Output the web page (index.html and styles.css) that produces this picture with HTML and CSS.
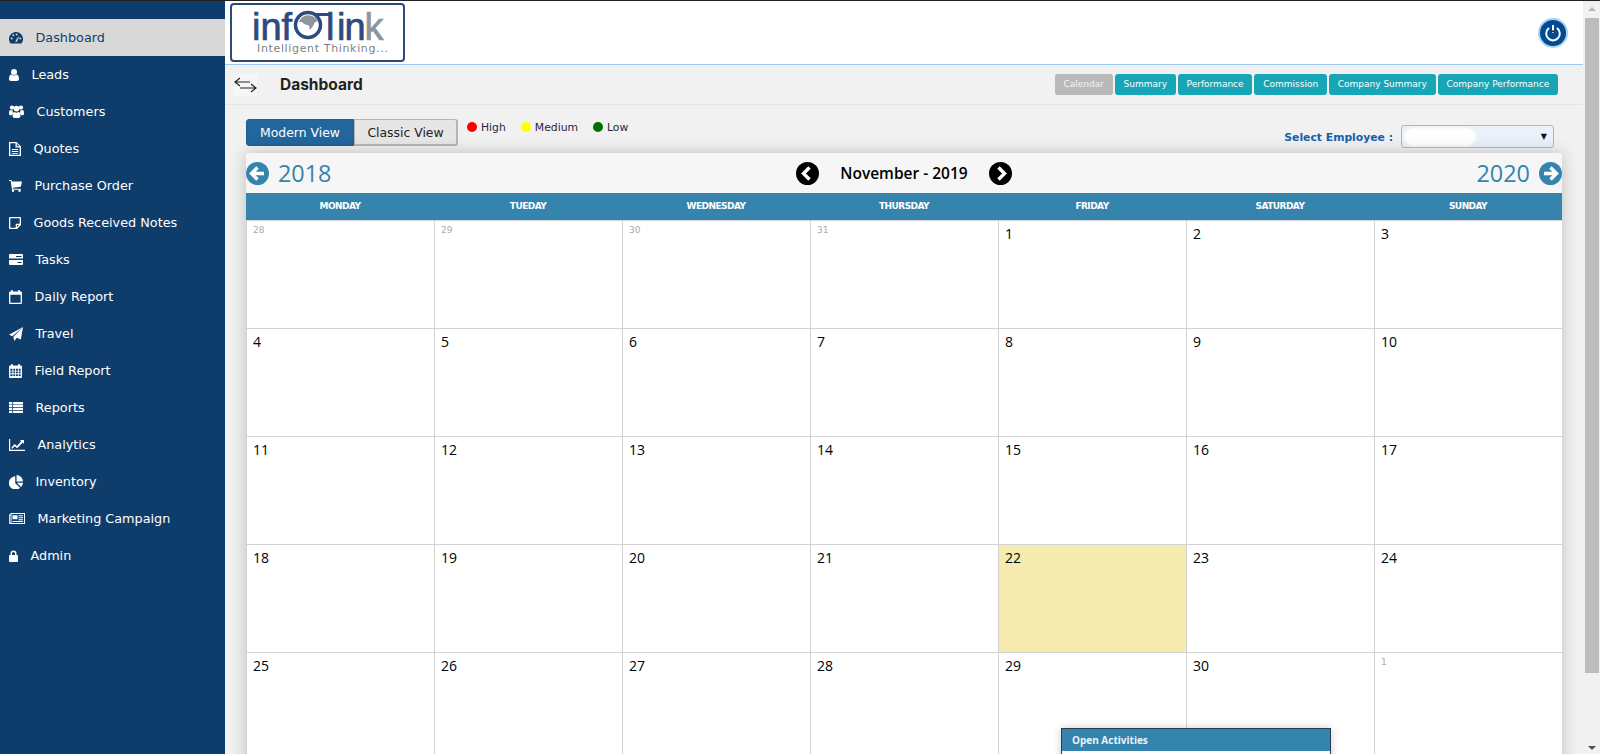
FILE: index.html
```html
<!DOCTYPE html>
<html lang="en">
<head>
    <meta charset="UTF-8">
    <meta name="viewport" content="width=device-width, initial-scale=1.0">
    <title>Dashboard</title>
    <link rel="stylesheet" href="styles.css">
</head>
<body>
    <nav class="sidebar">
        <a class="nav-item active"><svg width="14" height="12" viewBox="0 0 14 12"><path d="M7 0a7 7 0 0 1 6.2 10.300l-.7 1.200h-11l-.7-1.200A7 7 0 0 1 7 0z"/><g class="gauge-dots"><circle cx="2.700" cy="6.600" r="1"/><circle cx="4.300" cy="3.300" r="1"/><circle cx="7.600" cy="2.400" r="1"/><circle cx="11.300" cy="6.600" r="1"/><path d="M6.200 9.500l3-5 .8.400-2.200 5.200z"/></g></svg><span>Dashboard</span></a>
        <a class="nav-item"><svg width="10" height="12" viewBox="0 0 10 12"><circle cx="5" cy="3" r="3"/><path d="M0 10c0-3 1-4.500 2.500-4.500C3.200 6.200 4 6.500 5 6.500s1.800-.3 2.500-1C9 5.500 10 7 10 10c0 1.300-.8 2-2 2H2c-1.200 0-2-.7-2-2z"/></svg><span>Leads</span></a>
        <a class="nav-item"><svg width="15" height="13" viewBox="0 0 15 13"><circle cx="3" cy="2.600" r="2.100"/><circle cx="12" cy="2.600" r="2.100"/><circle cx="7.500" cy="3.600" r="2.900"/><path d="M0 8c0-1.800.5-3 1.500-3l1.700.6.700-.2c-.3 1-.2 2 .4 2.800-.7.3-1.300 1-1.600 2H1C.3 10.200 0 9 0 8zM15 8c0-1.800-.5-3-1.500-3l-1.700.6-.7-.2c.3 1 .2 2-.4 2.800.7.3 1.300 1 1.600 2H14c.7 0 1-1.200 1-2.200z"/><path d="M3.500 10.500c0-2 .8-3.500 2-3.500.6.500 1.200.8 2 .8s1.400-.3 2-.8c1.200 0 2 1.500 2 3.500 0 1.500-.8 2.500-2 2.500h-4c-1.200 0-2-1-2-2.500z"/></svg><span>Customers</span></a>
        <a class="nav-item"><svg width="12" height="14" viewBox="0 0 12 14"><path fill-rule="evenodd" d="M0 0h7.500L12 4.500V14H0zM1.300 1.300v11.400h9.400V5.500H6.500V1.300zM7.800 1.700v2.600h2.600zM2.800 7h6.400v1.100H2.800zM2.800 9h6.400v1.100H2.800zM2.800 11h6.400v.8H2.800z"/></svg><span>Quotes</span></a>
        <a class="nav-item"><svg width="13" height="12" viewBox="0 0 13 12"><path d="M0 0h2.500l.4 1.500H13l-1.200 5.300-8 .9.300 1h7.700v1.100H3L1.700 1.100H0z"/><circle cx="4" cy="10.800" r="1.200"/><circle cx="10.500" cy="10.800" r="1.200"/></svg><span>Purchase Order</span></a>
        <a class="nav-item"><svg width="12" height="12" viewBox="0 0 12 12"><path fill-rule="evenodd" d="M1 0h10a1 1 0 0 1 1 1v7l-4 4H1a1 1 0 0 1-1-1V1a1 1 0 0 1 1-1zM1.300 1.300v9.400h5.400V7.500a.8.800 0 0 1 .8-.8h3.200V1.300zM8 8v2l2-2z"/></svg><span>Goods Received Notes</span></a>
        <a class="nav-item"><svg width="14" height="11" viewBox="0 0 14 11"><path d="M0 1a1 1 0 0 1 1-1h12a1 1 0 0 1 1 1v3.500H0zM0 6h14v4a1 1 0 0 1-1 1H1a1 1 0 0 1-1-1z"/><path class="notch" d="M7 2h5.500v1H7zM8.500 8h4v1h-4z"/></svg><span>Tasks</span></a>
        <a class="nav-item"><svg width="13" height="14" viewBox="0 0 12 13"><path fill-rule="evenodd" d="M2 0h1.500v1.500h5V0H10v1.500h1a1 1 0 0 1 1 1V12a1 1 0 0 1-1 1H1a1 1 0 0 1-1-1V2.500a1 1 0 0 1 1-1h1zM1.200 4.300v7.500h9.600V4.300z"/></svg><span>Daily Report</span></a>
        <a class="nav-item"><svg width="14" height="14" viewBox="0 0 13 13"><path d="M13 0l-2 11.500-3.800-1.600L5 13l-1-3.700zM13 0L3.200 8.700 0 7.300z"/></svg><span>Travel</span></a>
        <a class="nav-item"><svg width="13" height="14" viewBox="0 0 12 13"><path fill-rule="evenodd" d="M2 0h1.500v1.500h5V0H10v1.500h1a1 1 0 0 1 1 1V12a1 1 0 0 1-1 1H1a1 1 0 0 1-1-1V2.500a1 1 0 0 1 1-1h1zM1.200 4.500v1.700h2v-1.700zM4 4.500v1.700h1.700v-1.700zM6.500 4.500v1.700h1.700v-1.700zM9 4.500v1.700h1.800v-1.700zM1.200 7v1.700h2V7zM4 7v1.700h1.700V7zM6.500 7v1.700h1.700V7zM9 7v1.700h1.800V7zM1.200 9.500v1.700h2V9.500zM4 9.500v1.700h1.700V9.500zM6.500 9.500v1.700h1.700V9.500zM9 9.500v1.700h1.800V9.500z"/></svg><span>Field Report</span></a>
        <a class="nav-item"><svg width="14" height="11" viewBox="0 0 14 11"><path d="M0 0h14v11H0z"/><path class="notch" d="M3.300 0h.8v11h-.8zM0 2.400h14v.7H0zM0 5.200h14v.7H0zM0 8h14v.7H0z"/></svg><span>Reports</span></a>
        <a class="nav-item"><svg width="16" height="12" viewBox="0 0 16 12"><path d="M0 0h1.200v10.800H16V12H0z"/><path d="M2.500 8.500l3-3.500 2.500 2 4-4.500L11 1h4v4l-1.300-1.400-5.500 5.600-2.500-2-2.700 2.800z"/></svg><span>Analytics</span></a>
        <a class="nav-item"><svg width="14" height="14" viewBox="0 0 13 13"><path d="M5.800 1.200v6.400l4.500 4.300A6.200 6.200 0 1 1 5.800 1.200z"/><path d="M7 0a6 6 0 0 1 6 6H7z"/><path d="M7.300 7.300H13a6 6 0 0 1-1.800 3.900z"/></svg><span>Inventory</span></a>
        <a class="nav-item"><svg width="16" height="11" viewBox="0 0 16 11"><path fill-rule="evenodd" d="M0 1.500h1.500V0H16v11H1a1 1 0 0 1-1-1zM2.500 1v9H15V1zM3.500 2.200h5v4h-5zM9.500 2.200H14v1H9.500zM9.500 4.200H14v1H9.500zM9.500 6.200H14v1H9.500zM3.500 8H14v1H3.500zM.8 2.500v7.300h.7V2.500z"/></svg><span>Marketing Campaign</span></a>
        <a class="nav-item"><svg width="9" height="12" viewBox="0 0 9 12"><path fill-rule="evenodd" d="M1.500 5V3.500a3 3 0 0 1 6 0V5H8a1 1 0 0 1 1 1v5a1 1 0 0 1-1 1H1a1 1 0 0 1-1-1V6a1 1 0 0 1 1-1zM3 5h3V3.500a1.500 1.500 0 0 0-3 0z"/></svg><span>Admin</span></a>
    </nav>

    <main class="main">
        <header class="top-bar">
            <div class="logo">
                <svg width="171" height="55" viewBox="0 0 171 55">
                    <text class="logo-main" x="20" y="35">inf</text>
                    <circle class="logo-ring" cx="76" cy="20" r="12.500"/>
                    <path class="logo-globe" d="M67 17c2-6 8-8 13-6 3 1 5 3 6 6-2-1-3 0-4 2-1 3-3 4-4 6-1-2 0-4-2-5-3 0-5-2-6-3z"/>
                    <rect class="logo-bar" x="84" y="8" width="13" height="3"/>
                    <text class="logo-main" x="94" y="35">l</text>
                    <text class="logo-main narrow" x="105" y="35">in<tspan class="logo-k">k</tspan></text>
                    <text class="logo-sub" x="25" y="47">Intelligent Thinking...</text>
                </svg>
            </div>
            <div class="power">
                <svg width="30" height="30" viewBox="0 0 30 30"><circle cx="15" cy="15" r="15" fill="#a8d0f5"/><circle cx="15" cy="15" r="13" fill="#034a92"/><path d="M10.500 10.500a6.800 6.800 0 1 0 9 0" fill="none" stroke="#fff" stroke-width="2" stroke-linecap="round"/><path d="M15 7v8" stroke="#fff" stroke-width="2"/><path d="M13.500 12.500h3L15 15z" fill="#111"/></svg>
            </div>
        </header>

        <div class="sub-bar">
            <div class="sub-title">
                <span class="toggle"><svg width="24" height="18" viewBox="0 0 24 18"><path d="M17 6H2M7 2L2 6l5 4M7 12h16M18 8l5 4-5 4" fill="none" stroke="#222" stroke-width="1.200"/></svg></span>
                <h1>Dashboard</h1>
            </div>
            <div class="tabs">
                <a class="tab disabled">Calendar</a>
                <a class="tab">Summary</a>
                <a class="tab">Performance</a>
                <a class="tab">Commission</a>
                <a class="tab">Company Summary</a>
                <a class="tab">Company Performance</a>
            </div>
        </div>

        <div class="content">
            <div class="toolbar">
                <div class="views">
                    <button class="view on">Modern View</button>
                    <button class="view">Classic View</button>
                </div>
                <ul class="legend">
                    <li><i class="dot high"></i>High</li>
                    <li><i class="dot medium"></i>Medium</li>
                    <li><i class="dot low"></i>Low</li>
                </ul>
                <div class="employee">
                    <label>Select Employee :</label>
                    <div class="select"><span class="blank"></span><span class="caret">▼</span></div>
                </div>
            </div>

            <section class="calendar">
                <div class="cal-head">
                    <div class="year">
                        <svg class="round" width="23" height="23" viewBox="0 0 23 23"><circle cx="11.500" cy="11.500" r="11.500" fill="#3584ae"/><path d="M18 11.500H6M11.500 5.500l-6 6 6 6" fill="none" stroke="#fff" stroke-width="3.400"/></svg>
                        <span>2018</span>
                    </div>
                    <div class="month">
                        <svg width="23" height="23" viewBox="0 0 23 23"><circle cx="11.500" cy="11.500" r="11.500" fill="#000"/><path d="M13.500 5.500l-6 6 6 6" fill="none" stroke="#fff" stroke-width="3.400"/></svg>
                        <strong>November - 2019</strong>
                        <svg width="23" height="23" viewBox="0 0 23 23"><circle cx="11.500" cy="11.500" r="11.500" fill="#000"/><path d="M9.500 5.500l6 6-6 6" fill="none" stroke="#fff" stroke-width="3.400"/></svg>
                    </div>
                    <div class="year">
                        <span>2020</span>
                        <svg class="round" width="23" height="23" viewBox="0 0 23 23"><circle cx="11.500" cy="11.500" r="11.500" fill="#3584ae"/><path d="M5 11.500h12M11.500 5.500l6 6-6 6" fill="none" stroke="#fff" stroke-width="3.400"/></svg>
                    </div>
                </div>
                <div class="week">
                    <div>MONDAY</div><div>TUEDAY</div><div>WEDNESDAY</div><div>THURSDAY</div><div>FRIDAY</div><div>SATURDAY</div><div>SUNDAY</div>
                </div>
                <div class="days">
                    <div class="day other">28</div><div class="day other">29</div><div class="day other">30</div><div class="day other">31</div><div class="day">1</div><div class="day">2</div><div class="day">3</div>
                    <div class="day">4</div><div class="day">5</div><div class="day">6</div><div class="day">7</div><div class="day">8</div><div class="day">9</div><div class="day">10</div>
                    <div class="day">11</div><div class="day">12</div><div class="day">13</div><div class="day">14</div><div class="day">15</div><div class="day">16</div><div class="day">17</div>
                    <div class="day">18</div><div class="day">19</div><div class="day">20</div><div class="day">21</div><div class="day today">22</div><div class="day">23</div><div class="day">24</div>
                    <div class="day">25</div><div class="day">26</div><div class="day">27</div><div class="day">28</div><div class="day">29</div><div class="day">30</div><div class="day other">1</div>
                </div>
                <div class="popup">
                    <div class="popup-title">Open Activities</div>
                </div>
            </section>
        </div>
    </main>

    <div class="scrollbar">
        <span class="arrow up"></span>
        <span class="thumb"></span>
        <span class="arrow down"></span>
    </div>
</body>
</html>
```

FILE: styles.css
```css
* {
    box-sizing: border-box;
}
html, body {
    height: 754px;
    overflow: hidden;
}
body {
    margin: 0;
    padding-top: 1px;
    display: flex;
    background-color: #222;
    font-family: "DejaVu Sans", Verdana, sans-serif;
}

/* left menu */
.sidebar {
    width: 225px;
    flex-shrink: 0;
    padding-top: 18px;
    background-color: #0f3d6b;
}
.nav-item {
    display: flex;
    align-items: center;
    gap: 12.5px;
    height: 37px;
    padding-left: 9px;
    color: #fff;
    font-size: 12.8px;
}
.nav-item svg {
    flex-shrink: 0;
    fill: #fff;
}
.nav-item .notch {
    fill: #0f3d6b;
}
.nav-item .gauge-dots {
    fill: #d8d8d8;
}
.nav-item.active {
    background-color: #d8d8d8;
    color: #0f3d6b;
}
.nav-item.active svg {
    fill: #0f3d6b;
}
.nav-item.active .gauge-dots {
    fill: #d8d8d8;
}

/* main column */
.main {
    flex: 1;
    min-width: 0;
    background-color: #f1f1f1;
}
.top-bar {
    display: flex;
    justify-content: space-between;
    align-items: center;
    height: 64px;
    padding: 2px 15px 0 5px;
    background-color: #fff;
    border-bottom: 1px solid #9cc9f2;
}
.logo {
    align-self: flex-start;
    width: 175px;
    height: 59px;
    border: 2px solid #2c4a7e;
    border-radius: 4px;
    background-color: #fff;
}
.logo svg {
    display: block;
}
.logo-main {
    font-family: "Liberation Sans", Arial, sans-serif;
    font-size: 38px;
    fill: #2c4a7e;
    stroke: #2c4a7e;
    stroke-width: .7px;
}
.logo-main.narrow {
    letter-spacing: -1px;
}
.logo-k {
    fill: #8f959c;
    stroke: #8f959c;
}
.logo-ring {
    fill: none;
    stroke: #2c4a7e;
    stroke-width: 3.5;
}
.logo-globe {
    fill: #8f959c;
}
.logo-bar {
    fill: #2c4a7e;
}
.logo-sub {
    font-family: "DejaVu Sans", Verdana, sans-serif;
    font-size: 11px;
    fill: #7c7f84;
    letter-spacing: .65px;
}
.power {
    height: 30px;
    margin-top: -2px;
}

.sub-bar {
    display: flex;
    justify-content: space-between;
    align-items: center;
    height: 40px;
    padding: 0 25px 0 8px;
    border-bottom: 1px solid #e4e4e4;
}
.sub-title {
    display: flex;
    align-items: center;
}
.sub-title h1 {
    margin: 0 0 0 23px;
    font-family: Inter, sans-serif;
    font-size: 15.5px;
    font-weight: 700;
    color: #222;
}
.toggle {
    display: flex;
    width: 24px;
    height: 22px;
    align-items: center;
    background-color: #f6f6f6;
}
.tabs {
    display: flex;
    gap: 2px;
}
.tab {
    display: block;
    height: 21px;
    padding: 0 8.8px;
    border-radius: 3px;
    background-color: #17a5b8;
    color: #fff;
    font-size: 9px;
    line-height: 20px;
}
.tab.disabled {
    background-color: #b9b9b9;
    color: #f4f4f4;
}

.content {
    padding: 14px 21px 0;
}
.toolbar {
    display: flex;
    height: 27px;
    margin-bottom: 7px;
}
.views {
    display: flex;
}
.view {
    height: 27px;
    border: 1px solid #b5b5b5;
    background-color: #e6e6e6;
    color: #222;
    font-family: "DejaVu Sans", Verdana, sans-serif;
    font-size: 12.4px;
    padding: 0;
    width: 104px;
    border-width: 1px 2px 2px 1px;
    border-radius: 0 3px 3px 0;
}
.view.on {
    width: 108px;
    border: 1px solid #1f5c8f;
    border-radius: 3px 0 0 3px;
    background-color: #22669d;
    color: #fff;
}
.legend {
    display: flex;
    height: 16px;
    margin: 0 0 0 9px;
    padding: 0;
    list-style: none;
    font-size: 10.8px;
    color: #2c1f44;
}
.legend li {
    display: flex;
    align-items: center;
    gap: 4px;
    margin-right: 15px;
}
.dot {
    width: 10px;
    height: 10px;
    border-radius: 50%;
}
.dot.high {
    background-color: #f00;
}
.dot.medium {
    background-color: #ff0;
}
.dot.low {
    background-color: #006e00;
}
.employee {
    display: flex;
    align-items: center;
    gap: 8px;
    height: 23px;
    margin: 6px 8px 0 auto;
}
.employee label {
    padding-top: 1px;
    font-size: 10.8px;
    font-weight: 700;
    color: #1560ad;
}
.select {
    display: flex;
    align-items: center;
    justify-content: space-between;
    width: 153px;
    height: 23px;
    padding: 0 3px 0 2px;
    border: 1px solid #b7b4bd;
    border-radius: 3px;
    background-color: #eaf1fa;
}
.blank {
    width: 72px;
    height: 18px;
    border-radius: 9px;
    background-color: #fff;
    filter: blur(1px);
}
.caret {
    font-size: 8px;
    margin-right: 3px;
    color: #111;
}

/* calendar */
.calendar {
    position: relative;
    height: 700px;
    border-radius: 3px 3px 0 0;
    background-color: #fff;
    box-shadow: 0 0 16px rgba(0, 0, 0, .22);
}
.cal-head {
    display: flex;
    justify-content: space-between;
    align-items: center;
    height: 40px;
    background-color: #f6f6f6;
    border-radius: 3px 3px 0 0;
}
.year {
    display: flex;
    align-items: center;
    gap: 9px;
    font-family: "Open Sans", sans-serif;
    font-size: 23.4px;
    color: #3584ae;
}
.month {
    display: flex;
    align-items: center;
    gap: 21px;
}
.month strong {
    font-family: "Open Sans", sans-serif;
    font-size: 15.5px;
    font-weight: 600;
    color: #000;
}
.week {
    display: grid;
    grid-template-columns: repeat(7, 188px);
    height: 27px;
    background-color: #3584ae;
}
.week div {
    color: #fff;
    font-size: 9px;
    font-weight: 700;
    letter-spacing: -.55px;
    line-height: 26px;
    text-align: center;
}
.days {
    display: grid;
    grid-template-columns: repeat(7, 188px);
    grid-auto-rows: 108px;
    border-top: 1px solid #d6d6d6;
}
.day {
    padding: 3px 0 0 6px;
    border-left: 1px solid #d3d3d3;
    border-bottom: 1px solid #d3d3d3;
    font-family: "Open Sans", sans-serif;
    font-size: 14px;
    color: #000;
}
.day.other {
    padding-top: 4px;
    font-family: "DejaVu Sans", Verdana, sans-serif;
    font-size: 9px;
    color: #aaa;
}
.day.today {
    background-color: #f6ebae;
}
.popup {
    position: absolute;
    top: 575px;
    left: 815px;
    width: 270px;
    height: 120px;
    border: 1px solid #2e3d4d;
    background-color: #fff;
    box-shadow: 0 0 8px rgba(0, 0, 0, .2);
}
.popup-title {
    height: 22px;
    padding-left: 10px;
    background-color: #3584ae;
    color: #e9f3f8;
    font-family: "Open Sans", sans-serif;
    font-size: 10px;
    font-weight: 700;
    line-height: 22px;
}

/* window scrollbar */
.scrollbar {
    display: flex;
    flex-direction: column;
    align-items: center;
    width: 17px;
    flex-shrink: 0;
    background-color: #f1f1f1;
}
.thumb {
    width: 14px;
    height: 655px;
    flex-shrink: 0;
    background-color: #bcbcbc;
}
.arrow {
    width: 0;
    height: 0;
    border-left: 4px solid transparent;
    border-right: 4px solid transparent;
}
.arrow.up {
    margin: 6px 0 7px;
    border-bottom: 4px solid #b5b5b5;
}
.arrow.down {
    margin-top: 73px;
    border-top: 4px solid #505050;
}
```
